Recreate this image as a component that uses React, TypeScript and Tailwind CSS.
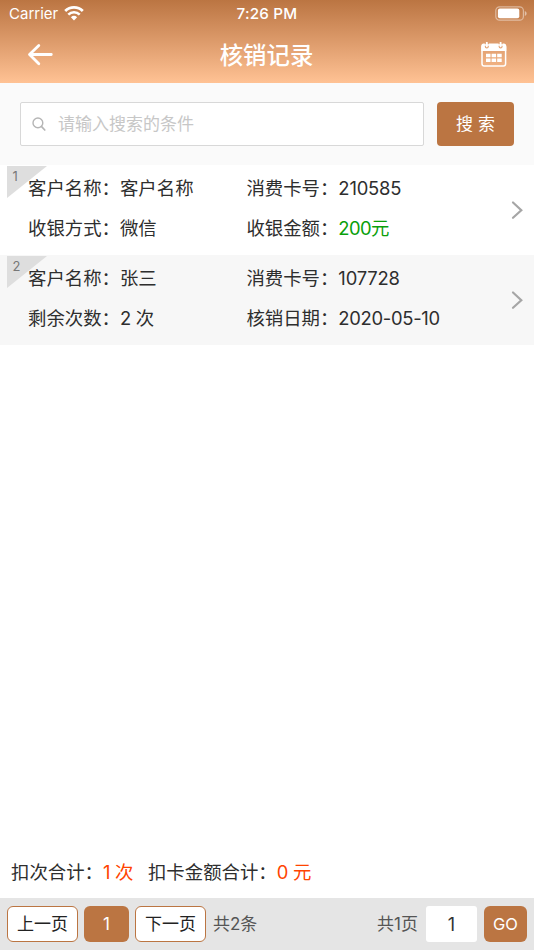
import { ReactNode } from 'react';

// 1. TYPES
interface Field {
  label: string;
  value: string;
  valueClass?: string;
}

interface RecordRowProps {
  index: number;
  fields: Field[];
  className: string;
}

// 2. DATA
const records: Field[][] = [
  [
    { label: '客户名称：', value: '客户名称' },
    { label: '消费卡号：', value: '210585', valueClass: 'tracking-[-0.2px]' },
    { label: '收银方式：', value: '微信' },
    { label: '收银金额：', value: '200元', valueClass: 'text-[#0a9f0a] tracking-[-0.6px]' },
  ],
  [
    { label: '客户名称：', value: '张三' },
    { label: '消费卡号：', value: '107728', valueClass: 'tracking-[-0.2px]' },
    { label: '剩余次数：', value: '2 次', valueClass: 'tracking-[-0.3px]' },
    { label: '核销日期：', value: '2020-05-10', valueClass: 'tracking-[-0.3px]' },
  ],
];

// 3. COMPONENTS
function StatusBar() {
  return (
    <div className="grid h-[27px] grid-cols-3 items-center pl-[9px] pr-[7px] text-[15px] leading-none text-white">
      <div className="flex items-center gap-[6px]">
        <span>Carrier</span>
        <svg className="h-[15px] w-5" viewBox="0 0 20 15" fill="none" stroke="currentColor">
          <path d="M1.2 5a12.600 12.600 0 0 1 17.600 0" strokeWidth="2.800" />
          <path d="M4.300 8.600a8.100 8.100 0 0 1 11.400 0" strokeWidth="2.600" />
          <path d="M10 14.400 6.900 11.300a4.500 4.500 0 0 1 6.200 0Z" fill="currentColor" stroke="none" />
        </svg>
      </div>
      <span className="pr-[2px] pt-px text-center text-[15.2px] font-medium tracking-[0.2px]">7:26 PM</span>
      <svg className="h-[15px] w-8 justify-self-end" viewBox="0 0 32 15">
        <rect x="0.8" y="0.8" width="27.6" height="13.4" rx="3.8" fill="none" stroke="#fff" strokeOpacity="0.45" strokeWidth="1.2" />
        <rect x="2.9" y="2.5" width="21.4" height="9.8" rx="2" fill="#fff" />
        <path d="M29.8 5v5c1.1-.5 1.8-1.4 1.8-2.500S30.900 5.500 29.800 5Z" fill="#fff" fillOpacity="0.5" />
      </svg>
    </div>
  );
}

function NavBar() {
  return (
    <div className="flex h-[56px] items-center justify-between px-[27px] text-white">
      <svg className="h-6 w-[26px]" viewBox="0 0 26 24" fill="none" stroke="currentColor" strokeWidth="2.8" strokeLinecap="round" strokeLinejoin="round">
        <path d="M11.8 2.4 2.5 11.5l9.300 9.200M3 11.500h21.300" />
      </svg>
      <h1 className="pt-px text-[23.4px] font-medium leading-none">核销记录</h1>
      <svg className="h-[26px] w-[27px]" viewBox="0 0 27 26">
        <rect x="2" y="3" width="23.6" height="21" rx="2.3" fill="none" stroke="currentColor" strokeWidth="1.5" />
        <path d="M1.3 9V4.300C1.300 2.700 2.200 1.600 3.600 1.600H4.800V4.500a2 2 0 0 0 4 0V1.600H18.600V4.500a2 2 0 0 0 4 0V1.600H23.800c1.500 0 2.500 1.100 2.500 2.700V9Z" fill="currentColor" />
        <path d="M6.8 0.8v3.600M20.600 0.800v3.600" stroke="currentColor" strokeWidth="1.9" strokeLinecap="round" />
        <path d="M6 11.700h4.500v3.500H6zM11.600 11.700h4.500v3.500h-4.500zM17.200 11.700h4.500v3.500h-4.500zM6 16.400h4.500v3.500H6zM11.600 16.400h4.500v3.500h-4.500zM17.200 16.400h4.500v3.500h-4.500z" fill="currentColor" />
      </svg>
    </div>
  );
}

function SearchBar() {
  return (
    <div className="flex h-[82px] items-center gap-[13px] bg-[#fafafa] px-5">
      <div className="flex h-[44px] flex-1 items-center rounded-[2px] border border-[#d8d8d8] bg-white pl-[11px]">
        <svg className="h-[15px] w-[15px] shrink-0" viewBox="0 0 15 15" fill="none" stroke="#b5b5b5" strokeWidth="1.4" strokeLinecap="round">
          <circle cx="5.9" cy="5.9" r="4.9" />
          <path d="m9.600 9.600 3.200 3.400" strokeWidth="1.7" />
        </svg>
        <input
          className="ml-[11px] w-full pt-[2px] text-[17px] outline-none placeholder:text-[#c7c7c7]"
          placeholder="请输入搜索的条件"
        />
      </div>
      <button className="h-[44px] w-[77px] rounded-[4px] bg-[#bb7542] pt-[2px] text-[17px] text-white">搜 索</button>
    </div>
  );
}

function RecordRow({ index, fields, className }: RecordRowProps) {
  return (
    <li className={`relative flex h-[90px] items-center pl-7 pr-[10px] ${className}`}>
      {/* Corner number */}
      <svg className="absolute left-[7px] top-[0.5px] h-8 w-10" viewBox="0 0 40 32">
        <path d="M0 0h40L0 32Z" fill="#dedede" />
      </svg>
      <span className="absolute left-[12.500px] top-[3px] text-[13px] leading-4 text-[#777]">{index}</span>

      <div className="relative grid flex-1 grid-cols-[218.4px_1fr] pb-[5px] text-[18.4px] leading-[40px] text-[#2e2e2e]">
        {fields.map((field) => (
          <div key={field.label} className="flex whitespace-nowrap">
            <span>{field.label}</span>
            <span className={field.valueClass}>{field.value}</span>
          </div>
        ))}
      </div>

      <svg className="h-5 w-3.5" viewBox="0 0 14 20" fill="none" stroke="#a6a6a6" strokeWidth="2.2" strokeLinecap="round">
        <path d="m3 2.500 8.300 7.700L3 17.800" />
      </svg>
    </li>
  );
}

function PageButton({ children }: { children: ReactNode }) {
  return (
    <button className="h-9 w-[71px] whitespace-nowrap rounded-[6px] border border-[#bb7542] bg-white pt-[2px] text-[17px] text-[#222]">
      {children}
    </button>
  );
}

export default function App() {
  return (
    <div lang="zh-CN" className="flex h-[950px] w-[534px] flex-col overflow-hidden bg-white font-['Inter','Noto_Sans_CJK_SC',sans-serif]">
      <header className="h-[83px] bg-linear-to-b from-[#bb7542] to-[#ffc294]">
        <StatusBar />
        <NavBar />
      </header>

      <SearchBar />

      <ul className="flex-1">
        {records.map((fields, i) => (
          <RecordRow key={i} index={i + 1} fields={fields} className={i % 2 ? 'bg-[#f7f7f7]' : 'bg-white'} />
        ))}
      </ul>

      {/* Totals */}
      <div className="flex h-[51px] items-center pl-[11px] text-[18.4px] text-[#2e2e2e]">
        <span>扣次合计：</span>
        <span className="w-[45px] tracking-[-0.3px] text-[#ff4400]">1 次</span>
        <span>扣卡金额合计：</span>
        <span className="tracking-[-0.3px] text-[#ff4400]">0 元</span>
      </div>

      {/* Pagination */}
      <footer className="flex h-[52px] items-center bg-[#e5e5e5] px-[7px] text-[17px] text-[#555]">
        <PageButton>上一页</PageButton>
        <button className="mx-[6px] h-9 w-[45px] rounded-[6px] bg-[#bb7542] pt-px text-white">1</button>
        <PageButton>下一页</PageButton>
        <span className="ml-[7px] pt-[2px]">共2条</span>
        <span className="ml-auto pt-[2px]">共1页</span>
        <div className="ml-2 flex h-9 w-[51px] items-center justify-center rounded-[3px] bg-white text-[18px] text-[#333]">1</div>
        <button className="ml-[7px] h-9 w-[43px] rounded-[6px] bg-[#bb7542] pt-px text-[16.5px] text-white">GO</button>
      </footer>
    </div>
  );
}
